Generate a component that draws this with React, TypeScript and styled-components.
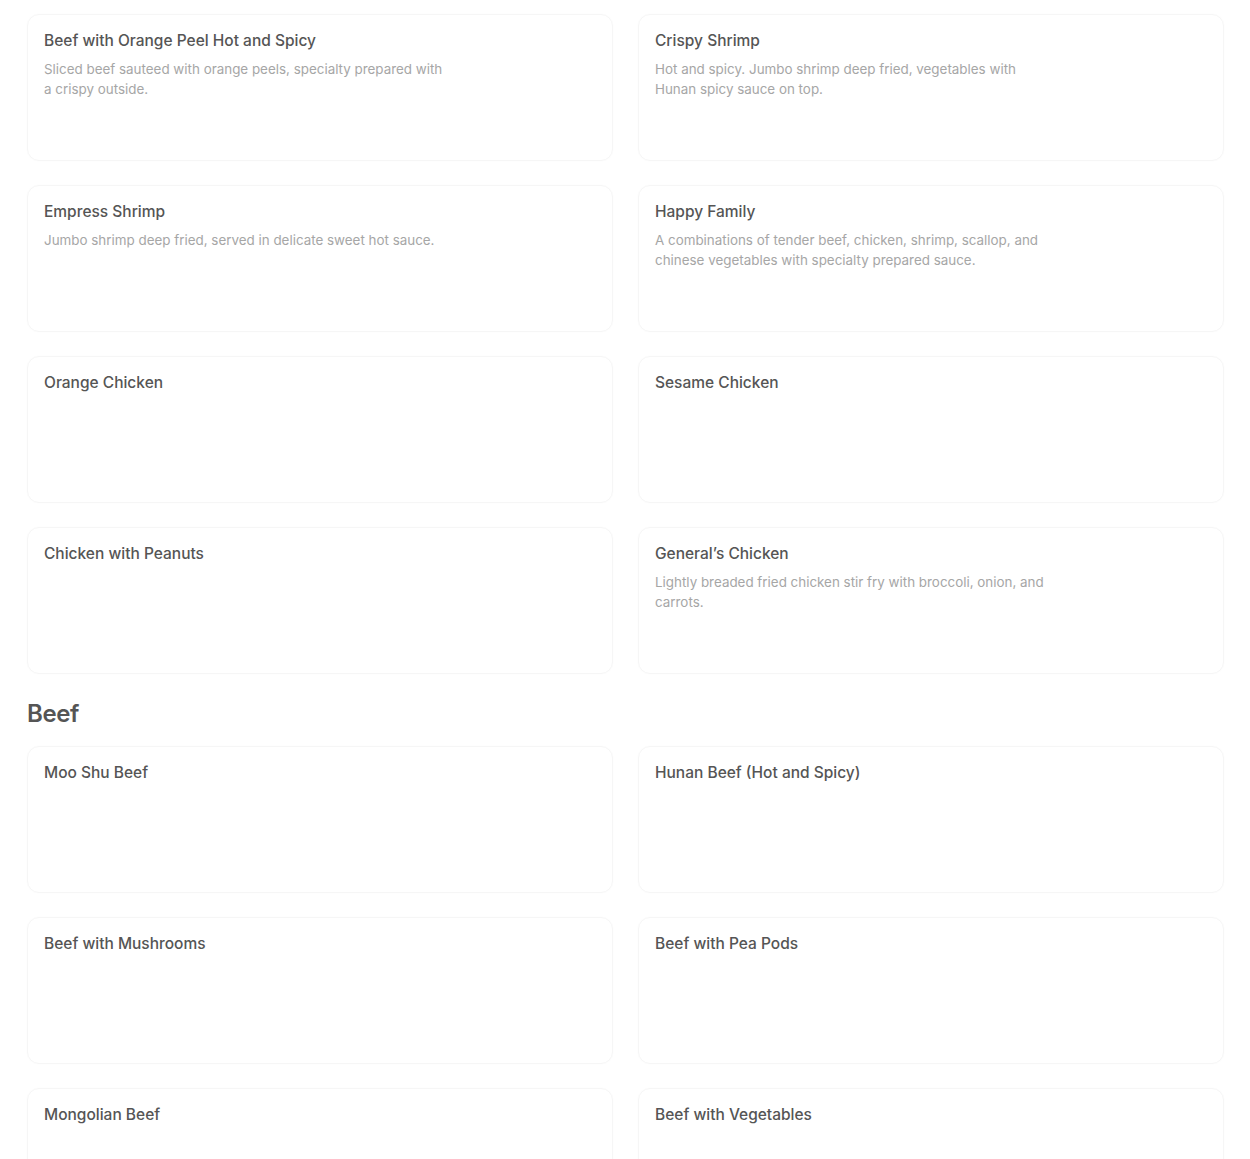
import React from 'react';
import { createGlobalStyle, styled } from 'styled-components';

interface MenuItem {
  title: string;
  description?: string;
}

interface MenuSection {
  title?: string;
  items: MenuItem[];
}

let sections: MenuSection[] = [
  {
    items: [
      {
        title: 'Beef with Orange Peel Hot and Spicy',
        description: 'Sliced beef sauteed with orange peels, specialty prepared with a crispy outside.'
      },
      {
        title: 'Crispy Shrimp',
        description: 'Hot and spicy. Jumbo shrimp deep fried, vegetables with Hunan spicy sauce on top.'
      },
      {
        title: 'Empress Shrimp',
        description: 'Jumbo shrimp deep fried, served in delicate sweet hot sauce.'
      },
      {
        title: 'Happy Family',
        description:
          'A combinations of tender beef, chicken, shrimp, scallop, and chinese vegetables with specialty prepared sauce.'
      },
      { title: 'Orange Chicken' },
      { title: 'Sesame Chicken' },
      { title: 'Chicken with Peanuts' },
      {
        title: 'General’s Chicken',
        description: 'Lightly breaded fried chicken stir fry with broccoli, onion, and carrots.'
      }
    ]
  },
  {
    title: 'Beef',
    items: [
      { title: 'Moo Shu Beef' },
      { title: 'Hunan Beef (Hot and Spicy)' },
      { title: 'Beef with Mushrooms' },
      { title: 'Beef with Pea Pods' },
      { title: 'Mongolian Beef' },
      { title: 'Beef with Vegetables' }
    ]
  }
];

let GlobalStyle = createGlobalStyle`
  html, body {
    margin: 0;
    padding: 0;
    background: #fff;
  }

  body {
    font-family: Inter, 'Noto Sans', sans-serif;
    -webkit-font-smoothing: antialiased;
  }
`;

let Page = styled('main')`
  display: flex;
  flex-direction: column;
  padding: 14px 26px 0 27px;
`;

let Section = styled('section')`
  display: flex;
  flex-direction: column;
`;

let SectionTitle = styled('h2')`
  margin: 0;
  padding: 26px 0 18px;
  font-size: 24px;
  line-height: 28px;
  font-weight: 600;
  color: #555;
  letter-spacing: -0.4px;
`;

let Grid = styled('ul')`
  list-style: none;
  margin: 0;
  padding: 0;
  display: grid;
  grid-template-columns: 1fr 1fr;
  column-gap: 25px;
  row-gap: 24px;
`;

let Card = styled('li')`
  height: 147px;
  box-sizing: border-box;
  padding: 16px;
  border: 1px solid #f6f6f6;
  border-radius: 12px;
  box-shadow: 0 0 2px rgba(0, 0, 0, 0.02);
  display: flex;
  flex-direction: column;
  gap: 8px;
`;

let CardTitle = styled('h3')`
  margin: 0;
  font-size: 15.5px;
  line-height: 20px;
  font-weight: 500;
  color: #555;
`;

let CardText = styled('p')`
  margin: 0;
  max-width: 405px;
  font-size: 13.4px;
  line-height: 20px;
  font-weight: 400;
  color: #a6a6a6;
`;

export default function App() {
  return (
    <>
      <GlobalStyle />
      <Page>
        {sections.map((section, i) => (
          <Section key={i}>
            {section.title && <SectionTitle>{section.title}</SectionTitle>}
            <Grid>
              {section.items.map((item, j) => (
                <Card key={j}>
                  <CardTitle>{item.title}</CardTitle>
                  {item.description && <CardText>{item.description}</CardText>}
                </Card>
              ))}
            </Grid>
          </Section>
        ))}
      </Page>
    </>
  );
}
